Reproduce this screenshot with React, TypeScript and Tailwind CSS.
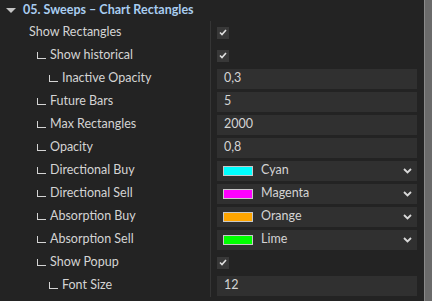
import { ReactNode } from "react";

type Row = {
  label: string;
  depth: 0 | 1 | 2;
  kind: "check" | "text" | "color";
  value?: string;
  swatch?: string;
};

const rows: Row[] = [
  { label: "Show Rectangles", depth: 0, kind: "check" },
  { label: "Show historical", depth: 1, kind: "check" },
  { label: "Inactive Opacity", depth: 2, kind: "text", value: "0,3" },
  { label: "Future Bars", depth: 1, kind: "text", value: "5" },
  { label: "Max Rectangles", depth: 1, kind: "text", value: "2000" },
  { label: "Opacity", depth: 1, kind: "text", value: "0,8" },
  { label: "Directional Buy", depth: 1, kind: "color", value: "Cyan", swatch: "#00ffff" },
  { label: "Directional Sell", depth: 1, kind: "color", value: "Magenta", swatch: "#ff00ff" },
  { label: "Absorption Buy", depth: 1, kind: "color", value: "Orange", swatch: "#ffa500" },
  { label: "Absorption Sell", depth: 1, kind: "color", value: "Lime", swatch: "#00ff00" },
  { label: "Show Popup", depth: 1, kind: "check" },
  { label: "Font Size", depth: 2, kind: "text", value: "12" },
];

function Check() {
  return (
    <div className="w-[12px] h-[12px] bg-[#383838] flex items-center justify-center">
      <svg width="8" height="7" viewBox="0 0 8 7">
        <path d="M1 3.5 L3 5.5 L7 1" stroke="#e0e0e0" strokeWidth="1.6" fill="none" />
      </svg>
    </div>
  );
}

function Chevron() {
  return (
    <svg width="9" height="6" viewBox="0 0 9 6">
      <path d="M1 1 L4.5 4.5 L8 1" stroke="#d8d8d8" strokeWidth="1.8" fill="none" />
    </svg>
  );
}

function Box({ children }: { children: ReactNode }) {
  return (
    <div className="h-[20px] w-[200px] bg-[#303030] flex items-center pl-[7px] pr-[5px]">
      {children}
    </div>
  );
}

function Value({ row }: { row: Row }) {
  if (row.kind === "check") return <Check />;
  if (row.kind === "text") return <Box>{row.value}</Box>;
  return (
    <div className="h-[20px] w-[200px] bg-[#303030] flex items-center pl-[6px] pr-[5px]">
      <div
        className="w-[30px] h-[10px] border border-[#c8c8c8]"
        style={{ backgroundColor: row.swatch }}
      />
      <span className="ml-[8px] flex-1">{row.value}</span>
      <Chevron />
    </div>
  );
}

function Corner() {
  return <span className="w-[9px] h-[7px] border-l border-b border-[#d4d4d4] mr-[4px] mb-[1px]" />;
}

export default function App() {
  return (
    <div
      className="w-[432px] h-[301px] bg-[#232323] flex text-[#d4d4d4] text-[12.5px] overflow-hidden"
      style={{ fontFamily: 'Lato, "Open Sans", sans-serif' }}
    >
      <div className="w-[424px] flex flex-col">
        <div className="h-[21px] shrink-0 flex items-center pl-[6px]">
          <svg width="10" height="6" viewBox="0 0 10 6">
            <path d="M0 0 L10 0 L5 5 Z" fill="#c4c4c4" />
          </svg>
          <span className="ml-[7px] font-bold text-[12.5px] text-[#a9cdf0]">
            05. Sweeps – Chart Rectangles
          </span>
        </div>
        {rows.map((row) => (
          <div key={row.label} className="h-[23px] shrink-0 flex items-center">
            <div
              className={
                "w-[211px] h-full border-r border-[#353535] flex items-center " +
                (row.depth === 0 ? "pl-[29px]" : row.depth === 1 ? "pl-[37px]" : "pl-[49px]")
              }
            >
              {row.depth > 0 && <Corner />}
              <span>{row.label}</span>
            </div>
            <div className="pl-[6px] flex items-center">
              <Value row={row} />
            </div>
          </div>
        ))}
      </div>
      <div className="w-[8px] h-full bg-[#6a6a6a] border-l border-[#8a8a8a]" />
    </div>
  );
}
